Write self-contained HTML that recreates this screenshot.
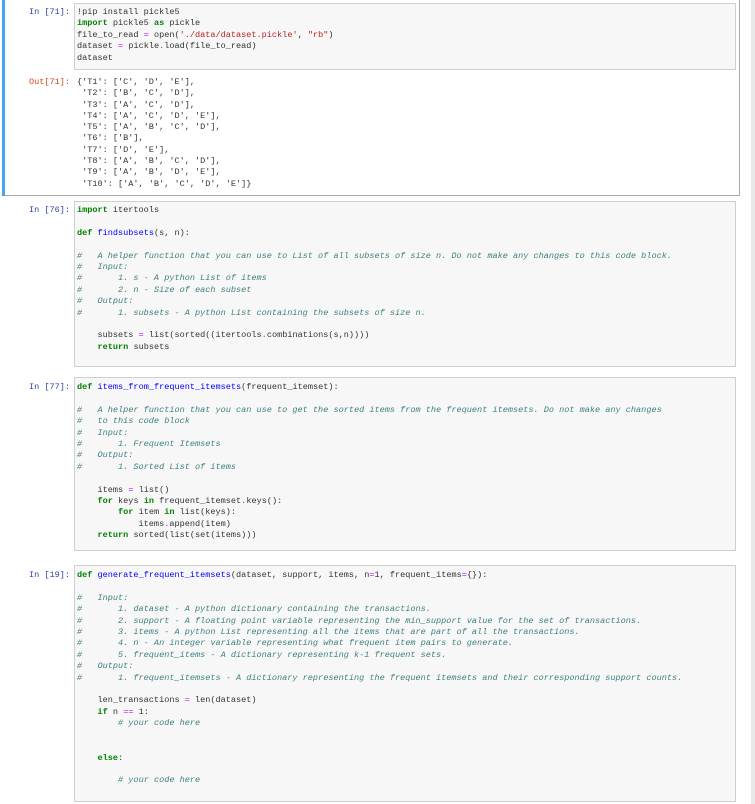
<!DOCTYPE html>
<html><head><meta charset="utf-8"><style>
html,body{margin:0;padding:0;background:#fff;width:755px;height:804px;overflow:hidden;position:relative;font-family:"Liberation Mono",monospace;}
.sb{position:absolute;left:751px;top:0;width:4px;height:804px;background:#e9e9e9;}
.sel{position:absolute;left:2px;top:-2px;width:737px;height:196px;border:1px solid #ababab;border-left:none;}
.bar{position:absolute;left:2px;top:-2px;width:3px;height:198px;background:#42a5f5;}
.box{position:absolute;left:74px;width:660px;background:#f7f7f7;border:1px solid #cfcfcf;}
pre{position:absolute;margin:0;font-family:"Liberation Mono",monospace;font-size:8.55px;line-height:11.4px;color:#333;white-space:pre;}
.lab{position:absolute;width:70px;left:0;text-align:right;font-size:8.55px;line-height:11.4px;color:#303f9f;font-family:"Liberation Mono",monospace;}
.out{color:#d84315;}
.k{color:#008000;font-weight:bold}
.f{color:#0000ff}
.s{color:#ba2121}
.o{color:#aa22ff}
.c{color:#408080;font-style:italic}
</style></head><body>
<div class="sb"></div>
<div class="sel"></div><div class="bar"></div>
<div class="box" style="top:3px;height:65px"></div>
<div class="lab" style="top:7px">In [71]:</div>
<pre style="left:77px;top:7px">!pip install pickle5
<span class="k">import</span> pickle5 <span class="k">as</span> pickle
file_to_read <span class="o">=</span> open(<span class="s">'./data/dataset.pickle'</span>, <span class="s">"rb"</span>)
dataset <span class="o">=</span> pickle<span class="o">.</span>load(file_to_read)
dataset</pre>
<div class="lab out" style="top:77px">Out[71]:</div>
<pre style="left:77px;top:77px;line-height:11.3px">{'T1': ['C', 'D', 'E'],
 'T2': ['B', 'C', 'D'],
 'T3': ['A', 'C', 'D'],
 'T4': ['A', 'C', 'D', 'E'],
 'T5': ['A', 'B', 'C', 'D'],
 'T6': ['B'],
 'T7': ['D', 'E'],
 'T8': ['A', 'B', 'C', 'D'],
 'T9': ['A', 'B', 'D', 'E'],
 'T10': ['A', 'B', 'C', 'D', 'E']}</pre>

<div class="box" style="top:201px;height:164px"></div>
<div class="lab" style="top:205px">In [76]:</div>
<pre style="left:77px;top:205px"><span class="k">import</span> itertools

<span class="k">def</span> <span class="f">findsubsets</span>(s, n):

<span class="c">#   A helper function that you can use to List of all subsets of size n. Do not make any changes to this code block.</span>
<span class="c">#   Input:</span>
<span class="c">#       1. s - A python List of items</span>
<span class="c">#       2. n - Size of each subset</span>
<span class="c">#   Output:</span>
<span class="c">#       1. subsets - A python List containing the subsets of size n.</span>

    subsets <span class="o">=</span> list(sorted((itertools<span class="o">.</span>combinations(s,n))))
    <span class="k">return</span> subsets</pre>

<div class="box" style="top:377px;height:172px"></div>
<div class="lab" style="top:382px">In [77]:</div>
<pre style="left:77px;top:382px"><span class="k">def</span> <span class="f">items_from_frequent_itemsets</span>(frequent_itemset):

<span class="c">#   A helper function that you can use to get the sorted items from the frequent itemsets. Do not make any changes</span>
<span class="c">#   to this code block</span>
<span class="c">#   Input:</span>
<span class="c">#       1. Frequent Itemsets</span>
<span class="c">#   Output:</span>
<span class="c">#       1. Sorted List of items</span>

    items <span class="o">=</span> list()
    <span class="k">for</span> keys <span class="k">in</span> frequent_itemset<span class="o">.</span>keys():
        <span class="k">for</span> item <span class="k">in</span> list(keys):
            items<span class="o">.</span>append(item)
    <span class="k">return</span> sorted(list(set(items)))</pre>

<div class="box" style="top:565px;height:235px"></div>
<div class="lab" style="top:570px">In [19]:</div>
<pre style="left:77px;top:570px"><span class="k">def</span> <span class="f">generate_frequent_itemsets</span>(dataset, support, items, n<span class="o">=</span>1, frequent_items<span class="o">=</span>{}):

<span class="c">#   Input:</span>
<span class="c">#       1. dataset - A python dictionary containing the transactions.</span>
<span class="c">#       2. support - A floating point variable representing the min_support value for the set of transactions.</span>
<span class="c">#       3. items - A python List representing all the items that are part of all the transactions.</span>
<span class="c">#       4. n - An integer variable representing what frequent item pairs to generate.</span>
<span class="c">#       5. frequent_items - A dictionary representing k-1 frequent sets.</span>
<span class="c">#   Output:</span>
<span class="c">#       1. frequent_itemsets - A dictionary representing the frequent itemsets and their corresponding support counts.</span>

    len_transactions <span class="o">=</span> len(dataset)
    <span class="k">if</span> n <span class="o">==</span> 1:
        <span class="c"># your code here</span>


    <span class="k">else</span>:

        <span class="c"># your code here</span></pre>
</body></html>
